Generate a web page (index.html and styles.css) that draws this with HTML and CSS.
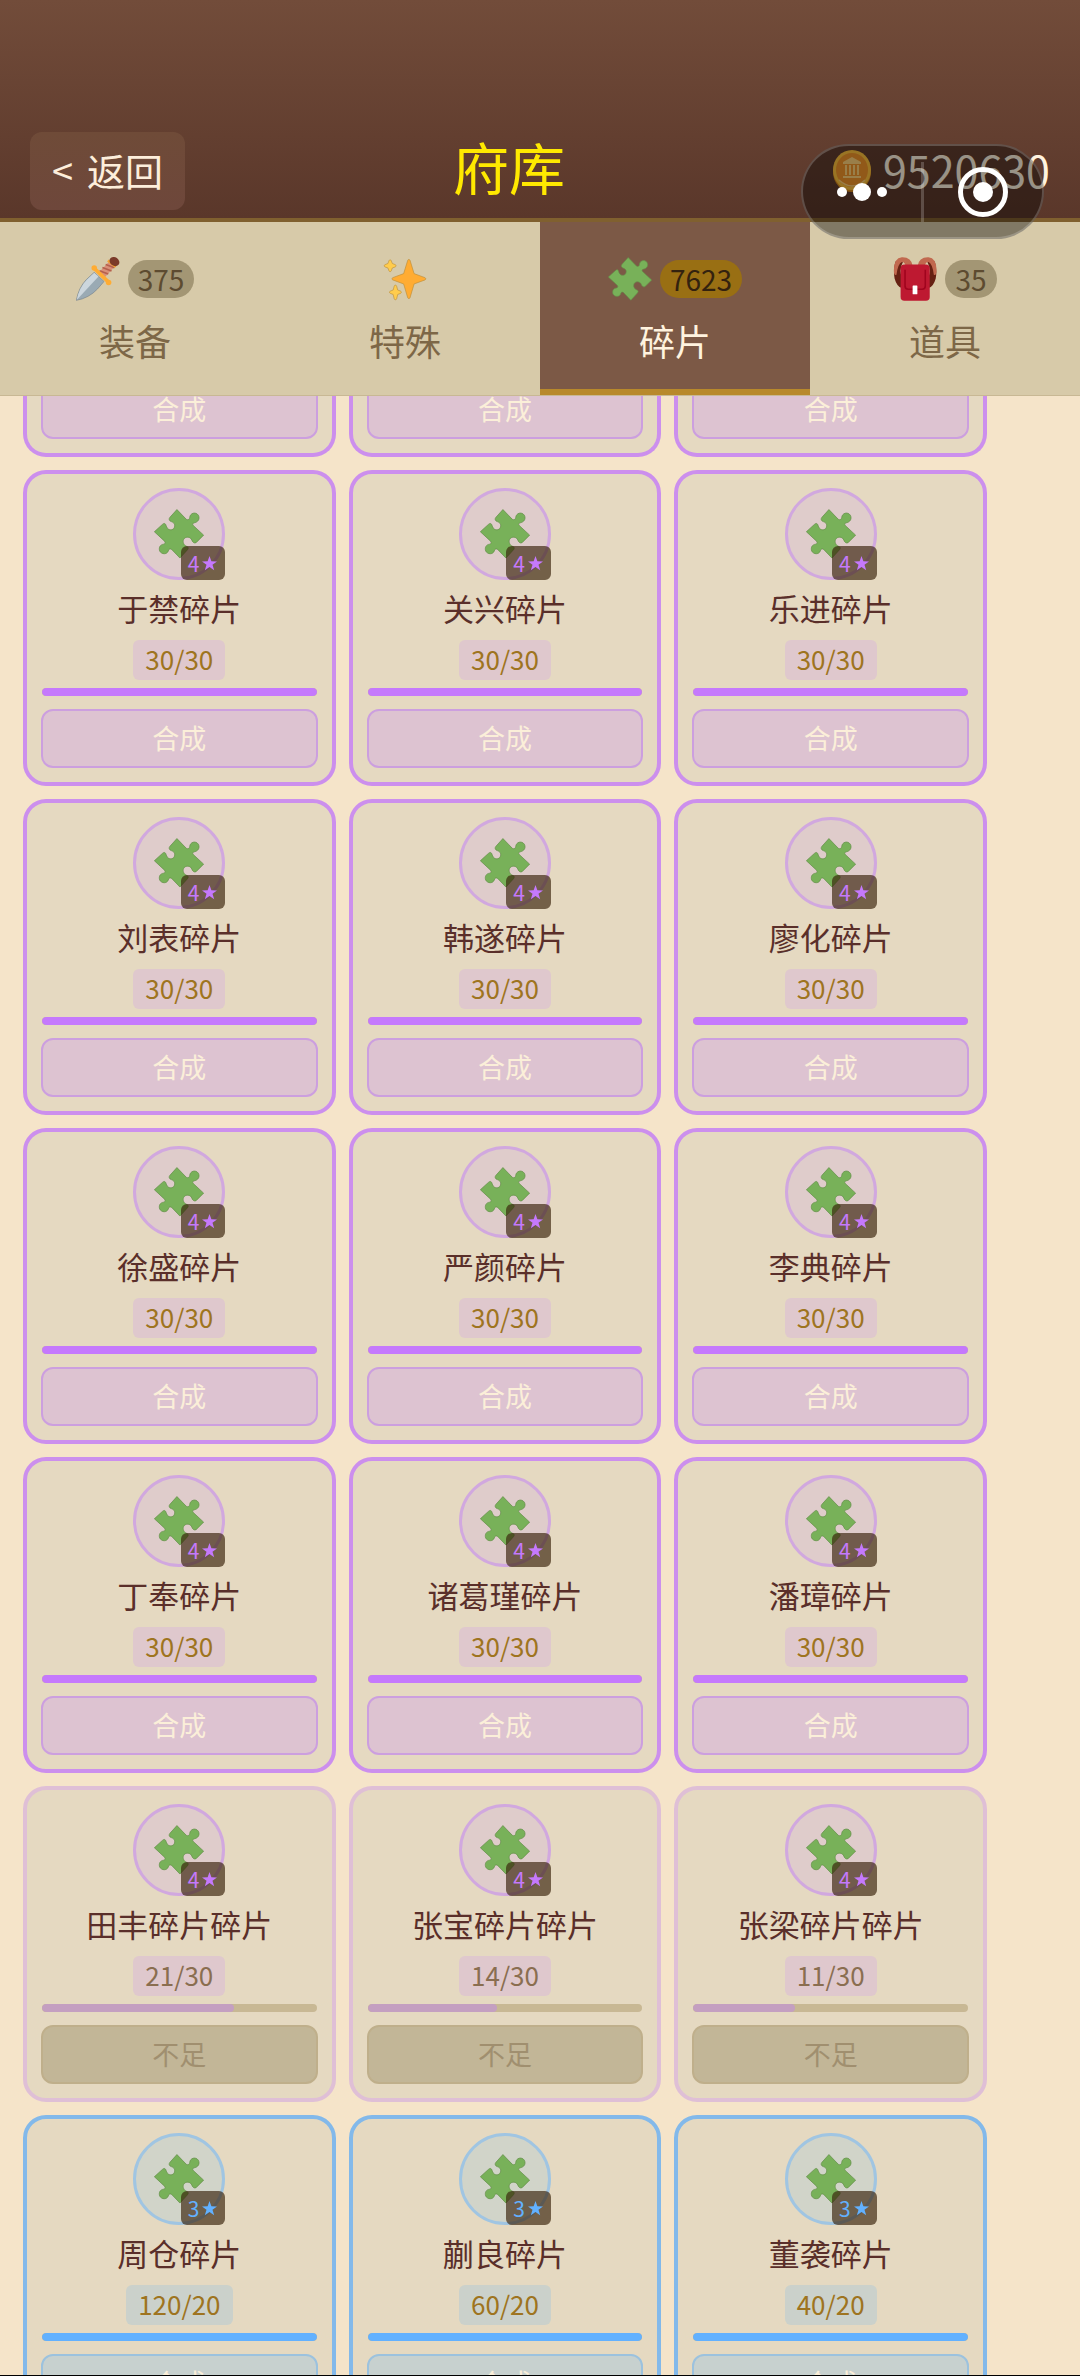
FILE: index.html
```html
<!DOCTYPE html>
<html lang="zh-CN">
<head>
<meta charset="utf-8">
<meta name="viewport" content="width=device-width, initial-scale=1">
<title>府库</title>
<link rel="stylesheet" href="styles.css">
</head>
<body>
<svg class="defs" aria-hidden="true">
  <symbol id="puzzle" viewBox="11 20 133 132">
    <path fill="#78b159" stroke="#66904b" stroke-width="2" stroke-linejoin="round" d="M72 21L97 47C102 50 106 46 106 42C107 30 122 26 129 36C134 46 128 54 119 56C114 57 112 60 116 64L143 89L123 109C118 112 113 107 112 103C108 92 95 92 90 100C86 108 91 116 98 119C103 121 103 124 100 128L80 150L58 127C54 124 50 126 49 131C46 141 31 141 26 131C23 121 28 114 37 113C41 112 42 109 39 105L12 80L34 60C38 56 42 58 43 63C46 76 58 78 64 71C69 62 65 56 57 53C51 51 50 46 53 42Z"/>
  </symbol>
</svg>
<div class="app">
  <header class="header">
    <button class="back" type="button"><span>&lt;</span><span>返回</span></button>
    <h1 class="title">府库</h1>
    <div class="coins">
      <svg class="coin" viewBox="0 0 38 42" aria-hidden="true">
        <ellipse cx="19" cy="22" rx="19" ry="20" fill="#d98a1c"/>
        <ellipse cx="19" cy="20" rx="19" ry="20" fill="#ffc23c"/>
        <ellipse cx="19" cy="20" rx="16" ry="17" fill="#f2952a"/>
        <path fill="#ffd27a" d="M19 7L28 12V14H10V12ZM12 15h2v10h-2zM16 15h2v10h-2zM20 15h2v10h-2zM24 15h2v10h-2zM10 26h18v2H10z"/>
        <path fill="none" stroke="#ffd27a" stroke-width="1.5" d="M6 30Q19 42 32 30"/>
      </svg>
      <span>9520630</span>
    </div>
  </header>
  <div class="capsule">
    <button class="capsule-btn" type="button" aria-label="更多">
      <svg viewBox="0 0 50 20" width="50" height="20"><circle cx="5" cy="10" r="5"/><circle cx="25" cy="10" r="9"/><circle cx="45" cy="10" r="5"/></svg>
    </button>
    <span class="capsule-line"></span>
    <button class="capsule-btn" type="button" aria-label="关闭">
      <svg viewBox="0 0 50 50" width="50" height="50"><circle cx="25" cy="25" r="22.5" fill="none" stroke="#fff" stroke-width="5"/><circle cx="25" cy="25" r="10"/></svg>
    </button>
  </div>
  <nav class="tabs">
    <button class="tab" type="button">
      <span class="tab-top">
        <svg class="tab-icon" viewBox="18 24 135 135" aria-hidden="true">
          <path fill="#9aaab4" stroke="#77848c" stroke-width="2" d="M19 157Q26 118 50 93L74 71L104 99L84 122Q58 150 19 157Z"/>
          <path fill="#ccd6dd" d="M20 156Q28 118 51 94L74 72L87 84Z"/>
          <path stroke="#d99078" stroke-width="23" d="M98 78L128 46"/>
          <path stroke="#b5604d" stroke-width="5" d="M90 66L117 76M99 56L127 67M109 47L136 57"/>
          <path stroke="#f4a12e" stroke-width="8" d="M116 35L140 54"/>
          <ellipse cx="136" cy="38" rx="16" ry="13" transform="rotate(35 136 38)" fill="#7b3a29"/>
          <path stroke="#ffac33" stroke-width="11" d="M74 59L118 101"/>
          <circle cx="74" cy="58" r="8.500" fill="#ffac33"/><circle cx="118" cy="102" r="8.500" fill="#ffac33"/>
        </svg>
        <span class="count">375</span>
      </span>
      <span class="tab-label">装备</span>
    </button>
    <button class="tab" type="button">
      <span class="tab-top">
        <svg class="tab-icon" viewBox="0 0 36 36" aria-hidden="true">
          <g stroke="#b98c3a" stroke-width=".5">
          <path fill="#ffac33" d="M34.347 16.893l-8.899-3.294-3.323-10.891c-.128-.42-.517-.708-.956-.708-.439 0-.828.288-.956.708l-3.322 10.891-8.9 3.294c-.393.146-.653.519-.653.938 0 .418.26.793.653.938l8.895 3.293 3.324 11.223c.126.424.516.715.959.715.442 0 .833-.291.959-.716l3.324-11.223 8.896-3.293c.391-.144.652-.518.652-.937 0-.418-.261-.792-.653-.938z"/>
          <path fill="#ffcc4d" d="M14.347 27.894l-2.314-.856-.9-3.3c-.118-.436-.513-.738-.964-.738-.451 0-.846.302-.965.737l-.9 3.3-2.313.856c-.393.146-.653.52-.653.938 0 .418.26.792.653.938l2.301.853.907 3.622c.112.444.511.756.97.756.459 0 .858-.312.97-.757l.907-3.622 2.301-.853c.393-.144.653-.519.653-.937 0-.418-.26-.793-.653-.937zM10.009 6.231l-2.364-.875-.876-2.365c-.145-.393-.519-.653-.938-.653-.418 0-.792.26-.938.653l-.875 2.365-2.365.875c-.393.146-.653.52-.653.938 0 .418.26.792.653.938l2.365.875.875 2.365c.146.393.52.653.938.653.418 0 .792-.26.938-.653l.875-2.365 2.365-.875c.393-.146.653-.52.653-.938 0-.418-.26-.792-.653-.938z"/>
          </g>
        </svg>
      </span>
      <span class="tab-label">特殊</span>
    </button>
    <button class="tab tab-active" type="button" aria-current="page">
      <span class="tab-top">
        <svg class="tab-icon" aria-hidden="true"><use href="#puzzle"/></svg>
        <span class="count">7623</span>
      </span>
      <span class="tab-label">碎片</span>
    </button>
    <button class="tab" type="button">
      <span class="tab-top">
        <svg class="tab-icon" viewBox="23 20 137 139" aria-hidden="true">
          <path fill="#662113" d="M30 34Q22 60 27 88Q34 114 50 118V84Q40 60 54 34ZM154 34Q162 60 157 88Q150 114 134 118V84Q144 60 130 34Z"/>
          <path fill="#c1694f" d="M25 70Q22 24 50 21Q80 20 84 48H62Q58 34 50 36Q38 40 33 76Q27 80 25 70ZM159 70Q162 24 134 21Q104 20 100 48H122Q126 34 134 36Q146 40 151 76Q157 80 159 70Z"/>
          <rect x="46" y="44" width="92" height="114" rx="12" fill="#be1931"/>
          <path fill="none" stroke="#a0041e" stroke-width="5" d="M60 60V112Q60 122 70 122H114Q124 122 124 112V60"/>
          <rect x="84" y="110" width="15" height="28" rx="2" fill="#fff"/>
        </svg>
        <span class="count">35</span>
      </span>
      <span class="tab-label">道具</span>
    </button>
  </nav>
  <main class="list" id="list"></main>
</div>
<script src="app.js"></script>
</body>
</html>
```
FILE: app.js
```js
const items = [
  ['于禁碎片', 30, 30, 4], ['关兴碎片', 30, 30, 4], ['乐进碎片', 30, 30, 4],
  ['刘表碎片', 30, 30, 4], ['韩遂碎片', 30, 30, 4], ['廖化碎片', 30, 30, 4],
  ['徐盛碎片', 30, 30, 4], ['严颜碎片', 30, 30, 4], ['李典碎片', 30, 30, 4],
  ['丁奉碎片', 30, 30, 4], ['诸葛瑾碎片', 30, 30, 4], ['潘璋碎片', 30, 30, 4],
  ['田丰碎片碎片', 21, 30, 4], ['张宝碎片碎片', 14, 30, 4], ['张梁碎片碎片', 11, 30, 4],
  ['周仓碎片', 120, 20, 3], ['蒯良碎片', 60, 20, 3], ['董袭碎片', 40, 20, 3]
];

// Cards scrolled partly under the tab bar show only their action button.
const cut = '<article class="card card-cut star-4"><button class="action" type="button">合成</button></article>';

const card = ([name, have, need, stars]) => {
  const short = have < need;
  const percent = Math.min(100, Math.round(have / need * 100));
  return `<article class="card star-${stars}${short ? ' card-short' : ''}">
    <div class="avatar">
      <svg class="avatar-icon" aria-hidden="true"><use href="#puzzle"/></svg>
      <span class="stars">${stars}<svg class="star" viewBox="0 0 16 16" aria-hidden="true"><path d="M8 0L10 5.600L16 5.800L11.200 9.400L13 15.300L8 11.800L3 15.300L4.800 9.400L0 5.800L6 5.600Z"/></svg></span>
    </div>
    <h2 class="name">${name}</h2>
    <span class="amount">${have}/${need}</span>
    <div class="bar"><div class="fill" style="width:${percent}%"></div></div>
    <button class="action" type="button"${short ? ' disabled' : ''}>${short ? '不足' : '合成'}</button>
  </article>`;
};

document.getElementById('list').innerHTML = cut.repeat(3) + items.map(card).join('');
```
FILE: styles.css
```css
* { box-sizing: border-box; }

body {
  margin: 0;
  background: #f5e4c9;
  font-family: "Noto Sans CJK SC", sans-serif;
}

button {
  margin: 0;
  padding: 0;
  border: 0;
  background: none;
  font: inherit;
  color: inherit;
}

.defs { display: none; }

.app {
  position: relative;
  display: flex;
  flex-direction: column;
  height: 100vh;
  overflow: hidden;
  border-bottom: 1px solid #000;
}

.header {
  display: flex;
  flex: none;
  align-items: center;
  justify-content: space-between;
  padding: 132px 30px 8px;
  border-bottom: 4px solid #80602f;
  background: linear-gradient(#724c3a, #5a372a);
}

.back {
  display: flex;
  align-items: center;
  gap: 14px;
  height: 78px;
  padding: 0 22px 4px;
  border-radius: 12px;
  background: linear-gradient(#6f4b38, #6e473b);
  color: #fdeedb;
  font-size: 38px;
}

.title {
  margin: 0;
  padding-bottom: 10px;
  color: #ffe900;
  font-size: 56px;
  font-weight: 400;
  line-height: 68px;
}

.coins {
  display: flex;
  align-items: center;
  gap: 12px;
  color: #fff3df;
  font-size: 43px;
  line-height: 56px;
}

.coins span { padding-bottom: 4px; }

.coin { width: 38px; height: 42px; }

.capsule {
  position: absolute;
  top: 144px;
  right: 36px;
  display: flex;
  align-items: center;
  width: 243px;
  height: 95px;
  border: 2px solid rgba(255, 255, 255, .2);
  border-radius: 48px;
  background: rgba(0, 0, 0, .4);
}

.capsule-btn {
  display: flex;
  flex: 1;
  justify-content: center;
}

.capsule-btn svg { fill: #fff; }

.capsule-line {
  width: 3px;
  height: 60px;
  background: rgba(255, 255, 255, .2);
}

.tabs {
  display: grid;
  flex: none;
  grid-template-columns: repeat(4, 1fr);
  border-bottom: 1px solid #c8b894;
  background: #d7caa9;
}

.tab {
  display: flex;
  flex-direction: column;
  align-items: center;
  gap: 14px;
  padding: 35px 0 24px;
  border-bottom: 6px solid transparent;
  color: #7d6747;
}

.tab-active {
  border-bottom-color: #b8892b;
  background: #7c5946;
  color: #fff3df;
}

.tab-top {
  display: flex;
  align-items: center;
  gap: 8px;
}

.tab-icon { width: 44px; height: 44px; }

.count {
  padding: 0 10px;
  border-radius: 19px;
  background: #a39674;
  color: #5d4b30;
  font-size: 28px;
  line-height: 38px;
}

.tab-active .count { background: #996f13; color: #33220f; }

.tab-label { font-size: 36px; line-height: 50px; }

.list {
  display: grid;
  flex: 1;
  grid-template-columns: repeat(3, 1fr);
  align-content: start;
  gap: 13px;
  min-height: 0;
  padding: 0 93px 0 23px;
  overflow: hidden;
}

.star-4 {
  --vivid: #c579fc;
  --edge: #cc8fed;
  --ring: #d1a8df;
  --disc: #dfcccb;
  --chip: #dfc8cd;
  --btn: #ddc3d1;
  --btn-edge: #cc9fdf;
}

.star-3 {
  --vivid: #62b1ff;
  --edge: #83b9ea;
  --ring: #a0c5e2;
  --disc: #d1d4c9;
  --chip: #cbd1cb;
  --btn: #c7d1cf;
  --btn-edge: #9cc2de;
}

.card {
  display: flex;
  flex-direction: column;
  align-items: center;
  padding: 14px;
  border: 4px solid var(--edge);
  border-radius: 23px;
  background: #e5d9c1;
}

.card-short { border-color: #dfbfd6; }

.card-cut {
  justify-content: flex-end;
  height: 61px;
  padding-top: 0;
  border-top: 0;
  border-radius: 0 0 23px 23px;
  overflow: hidden;
}

.avatar {
  position: relative;
  display: flex;
  align-items: center;
  justify-content: center;
  width: 92px;
  height: 92px;
  border: 3px solid var(--ring);
  border-radius: 50%;
  background: var(--disc);
}

.avatar-icon { width: 50px; height: 50px; }

.stars {
  position: absolute;
  right: -3px;
  bottom: -3px;
  display: flex;
  align-items: center;
  gap: 3px;
  padding: 0 8px 0 7px;
  border-radius: 6px;
  background: rgba(54, 31, 8, .65);
  color: var(--vivid);
  font-size: 21px;
  line-height: 34px;
}

.star { width: 15px; height: 15px; fill: currentColor; }

.name {
  margin: 7px 0 11px;
  color: #5a2f2a;
  font-size: 31px;
  font-weight: 400;
  line-height: 42px;
  white-space: nowrap;
}

.amount {
  padding: 0 12px 2px;
  border-radius: 6px;
  background: var(--chip);
  color: #9e7420;
  font-size: 26px;
  line-height: 38px;
}

.card-short .amount { color: #8a6e50; }

.bar {
  align-self: stretch;
  height: 8px;
  margin: 8px 1px 13px;
  border-radius: 4px;
  background: #c8b894;
  overflow: hidden;
}

.fill {
  height: 100%;
  border-radius: 4px;
  background: var(--vivid);
}

.card-short .fill { background: #c49fc1; }

.action {
  flex: none;
  align-self: stretch;
  height: 59px;
  padding-bottom: 2px;
  border: 2px solid var(--btn-edge);
  border-radius: 12px;
  background: var(--btn);
  color: #fbefd9;
  font-size: 27px;
}

.card-short .action {
  border-color: #bfaf8b;
  background: #c2b697;
  color: #a08f6f;
}
```
